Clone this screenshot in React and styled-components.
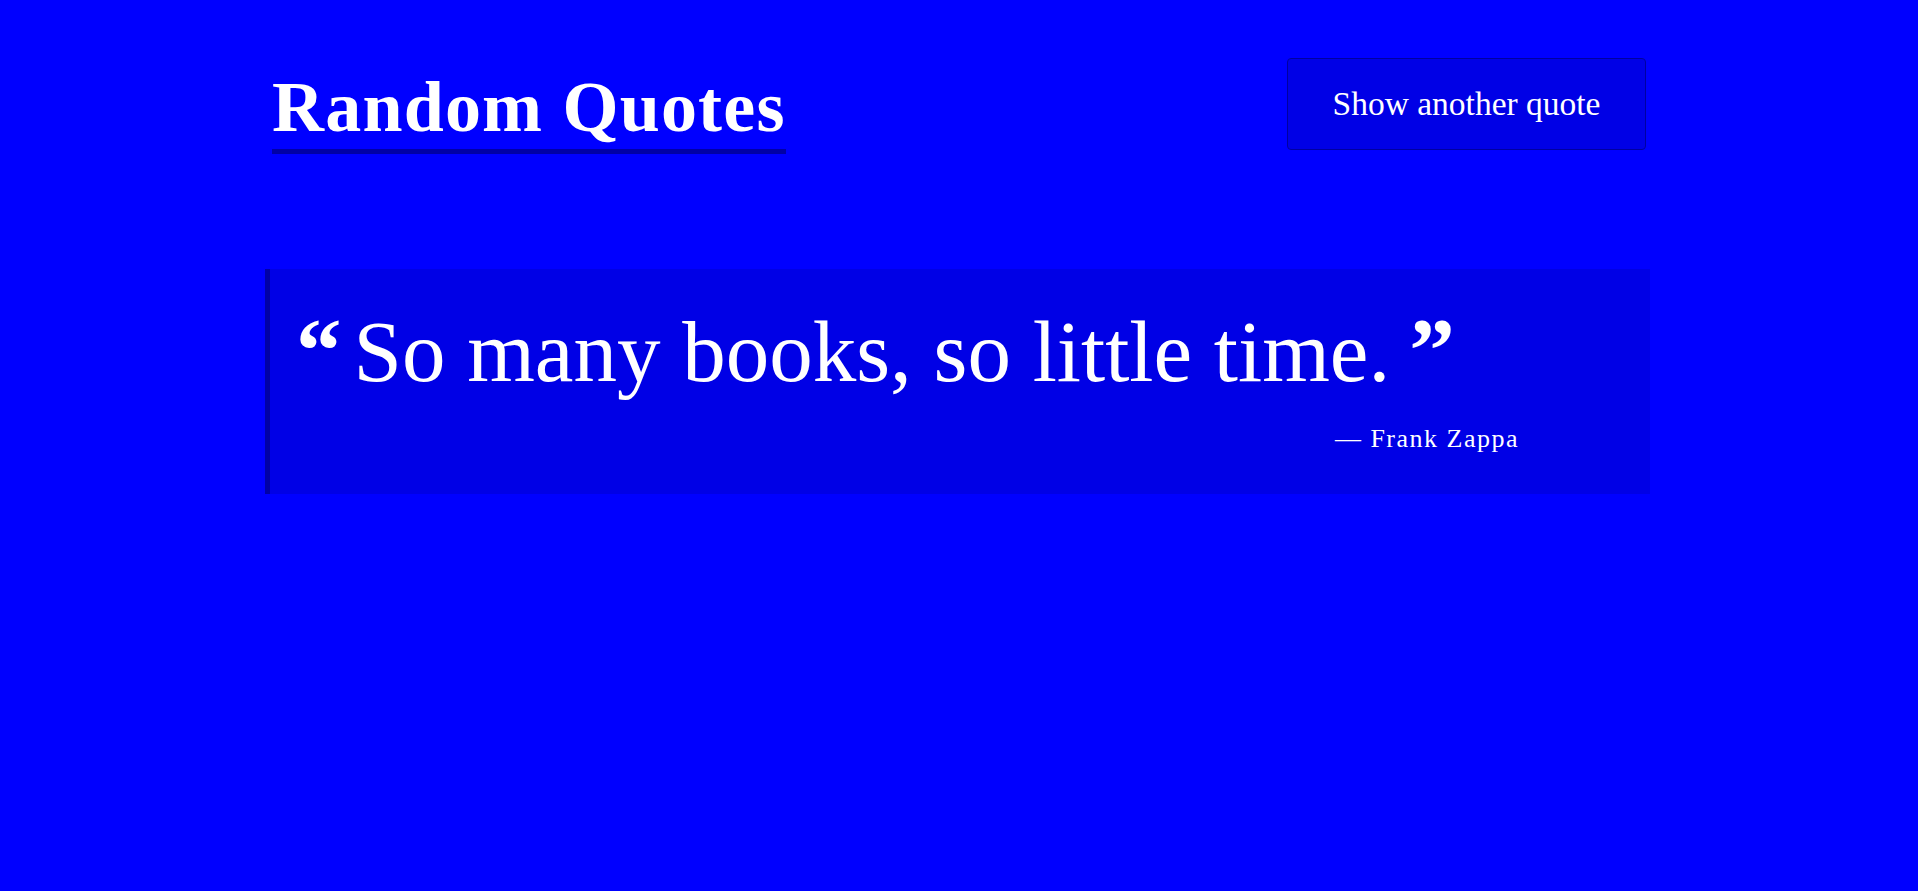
import React, {useState} from 'react';
import styled, {createGlobalStyle} from 'styled-components';

const quotes = [
  {text: 'So many books, so little time.', author: 'Frank Zappa'},
  {text: 'A room without books is like a body without a soul.', author: 'Marcus Tullius Cicero'},
  {text: 'Be yourself; everyone else is already taken.', author: 'Oscar Wilde'},
];

const GlobalStyle = createGlobalStyle`
  html, body {
    margin: 0;
    padding: 0;
    background: #0000ff;
    min-height: 100%;
  }

  body {
    font-family: "Liberation Serif", "DejaVu Serif", serif;
    color: #ffffff;
  }
`;

const Page = styled.div`
  width: 1384px;
  margin: 0 auto;
  padding-top: 58px;
`;

const Header = styled.header`
  display: flex;
  justify-content: space-between;
  align-items: flex-start;
  padding: 0 5px;
`;

const Title = styled.h1`
  margin: 8px 0 0;
  font-size: 72px;
  font-weight: bold;
  letter-spacing: 1.2px;
  line-height: normal;
  border-bottom: 5px solid #0000a6;
`;

const Button = styled.button`
  width: 359px;
  height: 92px;
  padding: 0;
  background: #0000e6;
  border: 1px solid #0000a0;
  border-radius: 4px;
  color: #ffffff;
  font-family: "Liberation Serif", "DejaVu Serif", serif;
  font-size: 33.5px;
  cursor: pointer;
`;

const Block = styled.blockquote`
  margin: 115px 1px 0 -2px;
  padding: 32px 131px 40px 26px;
  background: #0000e6;
  border-left: 5px solid #0000a6;
`;

const QuoteText = styled.p`
  margin: 0;
  font-size: 87px;
  line-height: 100px;
  white-space: nowrap;
`;

const Mark = styled.span`
  font-size: 91px;
  font-weight: bold;
  margin: ${(p) => (p.$close ? '0 0 0 19px' : '0 12px 0 0')};
`;

const Author = styled.p`
  margin: 22px 0 0;
  text-align: right;
  font-size: 26px;
  line-height: 30px;
  letter-spacing: 1.5px;
`;

export default function App() {
  const [idx, setIdx] = useState(0);
  const quote = quotes[idx];

  return (
    <>
      <GlobalStyle />
      <Page>
        <Header>
          <Title>Random Quotes</Title>
          <Button onClick={() => setIdx((idx + 1) % quotes.length)}>Show another quote</Button>
        </Header>
        <Block>
          <QuoteText>
            <Mark>“</Mark>
            {quote.text}
            <Mark $close>”</Mark>
          </QuoteText>
          <Author>— {quote.author}</Author>
        </Block>
      </Page>
    </>
  );
}
